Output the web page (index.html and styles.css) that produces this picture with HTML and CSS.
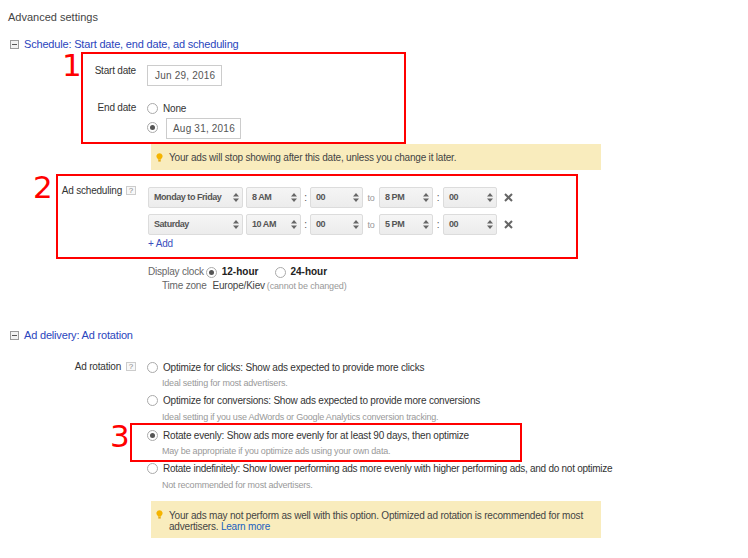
FILE: index.html
```html
<!DOCTYPE html>
<html lang="en">
<head>
<meta charset="utf-8">
<title>Advanced settings</title>
<link rel="stylesheet" href="styles.css">
</head>
<body>
<svg class="defs" width="0" height="0" aria-hidden="true">
  <symbol id="minus" viewBox="0 0 9 9"><rect x=".5" y=".5" width="8" height="8" fill="#f1f1f1" stroke="#9a9a9a"/><rect x="2" y="4" width="5" height="1" fill="#555"/></symbol>
  <symbol id="arrows" viewBox="0 0 6 9"><path d="M3 0 6 3.500H0z M0 5.500h6L3 9z" fill="#666"/></symbol>
  <symbol id="bulb" viewBox="0 0 8 10"><path d="M4 0a3.500 3.500 0 0 1 2.100 6.300L5.500 7.500h-3L1.900 6.300A3.500 3.500 0 0 1 4 0z" fill="#f5b400"/><rect x="2.600" y="8" width="2.800" height="1.600" fill="#e0a000"/></symbol>
  <symbol id="close" viewBox="0 0 9 9"><path d="M1 1l7 7M8 1 1 8" stroke="#666" stroke-width="2" fill="none"/></symbol>
</svg>

<main class="page">
  <h1 class="title">Advanced settings</h1>

  <section class="section schedule">
    <h2 class="section-head"><svg class="minus"><use href="#minus"/></svg><a href="#">Schedule: Start date, end date, ad scheduling</a></h2>

    <div class="row start-row">
      <div class="label">Start date</div>
      <div class="date">Jun 29, 2016</div>
    </div>
    <div class="row end-row">
      <div class="label">End date</div>
      <div class="end-options">
        <div class="option none-option"><span class="radio"></span><span class="option-text">None</span></div>
        <div class="option date-option"><span class="radio on"></span><div class="date">Aug 31, 2016</div></div>
      </div>
    </div>
    <div class="notice notice-date"><svg class="bulb"><use href="#bulb"/></svg><p>Your ads will stop showing after this date, unless you change it later.</p></div>

    <div class="row sched-row">
      <div class="label">Ad scheduling<span class="help">?</span></div>
      <div class="sched">
        <div class="sched-line">
          <div class="sel w-day">Monday to Friday<svg class="arrows"><use href="#arrows"/></svg></div>
          <div class="sel w-hour">8 AM<svg class="arrows"><use href="#arrows"/></svg></div>
          <span class="colon">:</span>
          <div class="sel w-min">00<svg class="arrows"><use href="#arrows"/></svg></div>
          <span class="to">to</span>
          <div class="sel w-hour2">8 PM<svg class="arrows"><use href="#arrows"/></svg></div>
          <span class="colon wide">:</span>
          <div class="sel w-min2">00<svg class="arrows"><use href="#arrows"/></svg></div>
          <svg class="close"><use href="#close"/></svg>
        </div>
        <div class="sched-line">
          <div class="sel w-day">Saturday<svg class="arrows"><use href="#arrows"/></svg></div>
          <div class="sel w-hour">10 AM<svg class="arrows"><use href="#arrows"/></svg></div>
          <span class="colon">:</span>
          <div class="sel w-min">00<svg class="arrows"><use href="#arrows"/></svg></div>
          <span class="to">to</span>
          <div class="sel w-hour2">5 PM<svg class="arrows"><use href="#arrows"/></svg></div>
          <span class="colon wide">:</span>
          <div class="sel w-min2">00<svg class="arrows"><use href="#arrows"/></svg></div>
          <svg class="close"><use href="#close"/></svg>
        </div>
        <a class="add" href="#">+ Add</a>
      </div>
    </div>

    <div class="clock">
      <span class="muted">Display clock</span><span class="radio on"></span><b>12-hour</b><span class="radio second"></span><b>24-hour</b>
    </div>
    <div class="zone">
      <span class="muted">Time zone</span><span class="zone-name">Europe/Kiev</span><small>(cannot be changed)</small>
    </div>
  </section>

  <section class="section delivery">
    <h2 class="section-head"><svg class="minus"><use href="#minus"/></svg><a href="#">Ad delivery: Ad rotation</a></h2>
    <div class="row rotation-row">
      <div class="label">Ad rotation<span class="help">?</span></div>
      <div class="choices">
        <div class="choice"><div class="option"><span class="radio"></span><span class="option-text">Optimize for clicks: Show ads expected to provide more clicks</span></div><small>Ideal setting for most advertisers.</small></div>
        <div class="choice up"><div class="option"><span class="radio"></span><span class="option-text">Optimize for conversions: Show ads expected to provide more conversions</span></div><small>Ideal setting if you use AdWords or Google Analytics conversion tracking.</small></div>
        <div class="choice"><div class="option"><span class="radio on"></span><span class="option-text">Rotate evenly: Show ads more evenly for at least 90 days, then optimize</span></div><small>May be appropriate if you optimize ads using your own data.</small></div>
        <div class="choice up tight"><div class="option"><span class="radio"></span><span class="option-text">Rotate indefinitely: Show lower performing ads more evenly with higher performing ads, and do not optimize</span></div><small>Not recommended for most advertisers.</small></div>
      </div>
    </div>
    <div class="notice notice-rotation"><svg class="bulb"><use href="#bulb"/></svg><p>Your ads may not perform as well with this option. Optimized ad rotation is recommended for most advertisers. <a href="#">Learn more</a></p></div>
  </section>
</main>

<div class="mark box-1"></div>
<div class="mark box-2"></div>
<div class="mark box-3"></div>
<div class="num num-1">1</div>
<div class="num num-2">2</div>
<div class="num num-3">3</div>
</body>
</html>
```

FILE: styles.css
```css
* { box-sizing: border-box; }
html, body { margin: 0; padding: 0; }
body {
  position: relative;
  width: 748px;
  height: 558px;
  overflow: hidden;
  background: #fff;
  color: #333;
  font: 10px/14px "Liberation Sans", Arial, sans-serif;
  letter-spacing: -.2px;
}
.defs { position: absolute; }
a { color: #2a45bd; text-decoration: none; }
p { margin: 0; }

.page { padding: 10px 0 0 8px; }
.title { margin: 0; font-size: 11px; line-height: 14px; font-weight: 400; color: #444; letter-spacing: 0; }
.section-head { display: flex; align-items: center; margin: 0; padding-left: 2px; font-size: 11px; font-weight: 400; line-height: 14px; letter-spacing: -.18px; }
.minus { flex: none; width: 9px; height: 9px; margin-right: 5px; }

.schedule { margin-top: 13px; }
.row { display: flex; }
.label { flex: none; width: 128px; margin-right: 11px; padding-top: 1px; text-align: right; }
.start-row { margin-top: 12px; height: 37px; }
.date {
  width: 75px; height: 21px; border: 1px solid #ccc; margin-top: 2px;
  padding: 3px 0 0 7px; color: #555; background: #fff; letter-spacing: .2px; white-space: nowrap;
}
.end-options { display: flex; flex-direction: column; }
.option { display: flex; align-items: flex-start; white-space: nowrap; }
.option-text { padding-top: 1px; }
.radio {
  flex: none; display: inline-block; position: relative;
  width: 11px; height: 11px; border: 1px solid #aaa; border-radius: 50%;
  background: #fff; margin-right: 5px;
}
.option .radio { margin-top: 2px; }
.radio.on::after {
  content: ""; position: absolute; left: 2px; top: 2px;
  width: 5px; height: 5px; border-radius: 50%; background: #555;
}
.none-option { height: 13px; margin-top: 1px; }
.date-option { align-items: center; margin-top: 2px; }
.option.date-option .radio { margin: 0 8px 0 0; }
.date-option .date { padding-left: 6px; }

.notice { display: flex; width: 450px; background: #f9ecbd; margin-left: 143px; }
.notice p { color: #444; }
.bulb { flex: none; width: 7px; height: 9px; margin: 0 6px 0 5px; }
.notice-date { margin-top: 5px; height: 26px; padding-top: 7px; }
.notice-date .bulb { margin-top: 2px; }

.sched-row { margin-top: 13px; }
.sched-row .label { margin-right: 12px; }
.help {
  display: inline-block; width: 10px; height: 9px; margin-left: 4px;
  border: 1px solid #ccc; font-size: 8px; line-height: 7px; text-align: center;
  color: #888; vertical-align: 1px; letter-spacing: 0; background: #f8f8f8;
}
.rotation-row .help { margin-left: 5px; }
.sched { display: flex; flex-direction: column; padding-top: 4px; }
.sched-line { display: flex; align-items: center; height: 21px; margin-bottom: 6px; }
.sel {
  flex: none; position: relative; height: 21px;
  border: 1px solid #dcdcdc; border-radius: 2px;
  background: linear-gradient(#f5f5f5, #ececec);
  font-size: 9px; font-weight: 700; color: #555; line-height: 18px; padding-left: 5px;
  letter-spacing: -.45px; white-space: nowrap;
}
.w-day { width: 95px; margin-right: 3px; }
.w-hour { width: 55px; }
.w-hour2 { width: 54px; }
.w-min { width: 53px; }
.w-min2 { width: 54px; }
.arrows { position: absolute; right: 3px; top: 5px; width: 6px; height: 9px; }
.colon { width: 9px; text-align: center; color: #555; }
.colon.wide { width: 10px; }
.to { width: 16px; text-align: center; font-size: 9px; color: #999; }
.close { flex: none; width: 9px; height: 9px; margin-left: 7px; }
.add { margin-top: -4px; color: #3a4ebd; }

.clock { display: flex; align-items: center; margin: 14px 0 0 140px; height: 14px; }
.clock .radio.on { margin: 0 5px 0 2px; }
.clock b { color: #222; letter-spacing: 0; }
.clock .second { margin: 0 4px 0 17px; }
.muted { color: #666; }
.zone { margin: 0 0 0 154px; height: 14px; display: flex; align-items: center; }
.zone-name { margin-left: 6px; color: #444; }
small { font-size: 9px; color: #999; letter-spacing: -.2px; }
.zone small { margin-left: 2px; letter-spacing: -.15px; }

.delivery { margin-top: 35px; }
.rotation-row { margin-top: 17px; }
.choices { display: flex; flex-direction: column; padding-top: 1px; }
.choice { display: flex; flex-direction: column; height: 34px; }
.choice .option { height: 14px; }
.choice small { display: block; margin: 3px 0 0 15px; line-height: 12px; white-space: nowrap; }
.choice.up .option { margin-top: -1px; margin-bottom: 1px; }
.choice.tight .option { letter-spacing: -.26px; }
.notice-rotation { margin-top: 5px; height: 37px; padding-top: 9px; line-height: 11px; }
.notice-rotation p { width: 420px; }
.notice-rotation a { color: #1a5fc0; }

.mark { position: absolute; border: 2px solid #f00; }
.box-1 { left: 81px; top: 52px; width: 325px; height: 92px; }
.box-2 { left: 56px; top: 174px; width: 522px; height: 85px; }
.box-3 { left: 130px; top: 423px; width: 392px; height: 39px; }
.num { position: absolute; color: #f00; font: 31px/24px "DejaVu Sans", sans-serif; letter-spacing: 0; }
.num-1 { left: 62px; top: 53px; }
.num-2 { left: 33px; top: 175px; }
.num-3 { left: 110px; top: 424px; }
```
